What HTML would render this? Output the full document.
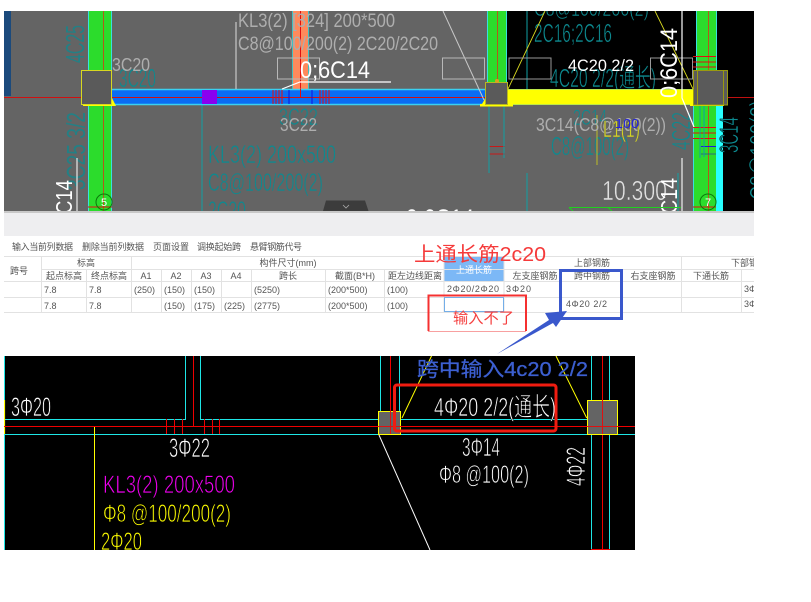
<!DOCTYPE html>
<html><head><meta charset="utf-8">
<style>
html,body{margin:0;padding:0;background:#fff;width:811px;height:602px;overflow:hidden}
svg{display:block}
text{font-family:"Liberation Sans","Noto Sans CJK SC",sans-serif}
.t{font-size:9px;fill:#555}
.c{text-anchor:middle}
.tb line{stroke:#e2e2e2;stroke-width:1}
</style></head><body>
<svg width="811" height="602" viewBox="0 0 811 602" xmlns="http://www.w3.org/2000/svg">
<rect width="811" height="602" fill="#fff"/>
<defs><clipPath id="top"><rect x="4" y="11" width="750" height="200"/></clipPath>
<clipPath id="tbl"><rect x="4" y="250" width="750" height="70"/></clipPath>
<clipPath id="bot"><rect x="4" y="356" width="631" height="194"/></clipPath></defs>

<!-- TOP CAD -->
<g clip-path="url(#top)">
<rect x="4" y="11" width="750" height="200" fill="#646464"/>
<rect x="507" y="11" width="247" height="78" fill="#000"/>
<rect x="716" y="89" width="38" height="122" fill="#000"/>
<rect x="4" y="11" width="7" height="85" fill="#1b4a7c"/>

<!-- green columns -->
<rect x="88" y="11" width="24" height="200" fill="#2cdc2c"/>
<path d="M88.500 11V211M111.500 11V70" stroke="#38e0e0" stroke-width="1"/>
<path d="M111.500 105V211" stroke="#38e0e0"/>
<path d="M103.500 11V211" stroke="#b35a1a" stroke-width="1"/>
<rect x="488" y="11" width="19" height="78" fill="#2cdc2c"/>
<path d="M487.500 11V82M506.500 11V89" stroke="#38e0e0"/>
<path d="M497.500 11V82" stroke="#b35a1a"/>
<rect x="697" y="11" width="20" height="60" fill="#2cdc2c"/>
<path d="M696.500 11V71M716.500 11V71" stroke="#38e0e0"/>
<path d="M708.500 11V71" stroke="#b35a1a"/>
<rect x="693" y="105" width="23" height="106" fill="#2cdc2c"/>
<rect x="716" y="105" width="7" height="106" fill="#27ffff"/>
<path d="M693.500 105V211" stroke="#38e0e0"/>
<path d="M708.500 105V211" stroke="#b35a1a"/>
<path d="M693 56.500H716M693 62H716M693 67H716M693 127.500H716M693 133H716M693 138.500H716M693 207H716" stroke="#e01010" stroke-width="1"/>
<path d="M701 146.500H716" stroke="#1a1ae0"/><path d="M701 154H716" stroke="#2a6a80"/>
<path d="M489 146.500H505M489 154H505" stroke="#c81818"/>
<path d="M88 207H112" stroke="#e01010"/>
<circle cx="104" cy="202" r="8" fill="none" stroke="#0a7a0a"/>
<text x="104" y="206" font-size="11" fill="#fff" class="c">5</text>
<circle cx="708" cy="202" r="8" fill="none" stroke="#0a7a0a"/>
<text x="708" y="206" font-size="11" fill="#fff" class="c">7</text>

<!-- orange column -->
<rect x="293" y="11" width="15" height="78" fill="#ff8a5c"/>
<path d="M292.500 11V89M308.500 11V89" stroke="#38d8d8" stroke-width=".8"/>
<path d="M300.500 11V97" stroke="#e01010"/>

<!-- teal text -->
<g fill="#0d8a90" stroke="#646464" stroke-width=".55">
<text transform="translate(84,63) rotate(-90)" font-size="26" textLength="38" lengthAdjust="spacingAndGlyphs" stroke="none" fill-opacity=".75">4C25</text>
<text transform="translate(85,190) rotate(-90)" font-size="26" textLength="78" lengthAdjust="spacingAndGlyphs" stroke="none" fill-opacity=".75">3C25 3/2</text>
<text x="119" y="87" font-size="26" textLength="37" lengthAdjust="spacingAndGlyphs">3C20</text>
<text x="279" y="125" font-size="24" textLength="39" lengthAdjust="spacingAndGlyphs">3C22</text>
<text x="208" y="163" font-size="25" textLength="128" lengthAdjust="spacingAndGlyphs">KL3(2) 200x500</text>
<text x="208" y="191" font-size="25" textLength="115" lengthAdjust="spacingAndGlyphs">C8@100/200(2)</text>
<text x="208" y="219" font-size="25" textLength="38" lengthAdjust="spacingAndGlyphs">2C20</text>
<text x="573" y="125" font-size="22" textLength="34" lengthAdjust="spacingAndGlyphs">2C14</text>
<text x="551" y="155" font-size="26" textLength="78" lengthAdjust="spacingAndGlyphs">C8@100(2)</text>
<text transform="translate(690,150) rotate(-90)" font-size="26" textLength="38" lengthAdjust="spacingAndGlyphs">4C22</text>
</g>
<g fill="#0d8a90" stroke="#000" stroke-width=".55">
<text x="534" y="42" font-size="26" textLength="78" lengthAdjust="spacingAndGlyphs">2C16;2C16</text>
<text x="534" y="16" font-size="22" textLength="115" lengthAdjust="spacingAndGlyphs">C8@100/200(2)</text>
<text x="550" y="87" font-size="26" textLength="106" lengthAdjust="spacingAndGlyphs">4C20 2/2(通长)</text>
<text transform="translate(738,153) rotate(-90)" font-size="26" textLength="36" lengthAdjust="spacingAndGlyphs">3C14</text>
<text transform="translate(768,200) rotate(-90)" font-size="26" textLength="100" lengthAdjust="spacingAndGlyphs">C8@100(2)</text>
</g>
<path d="M202 105V211M527 11V89M527 173V211M489 105V173M504 105V158M704 105V157M678 173V211M700 105V158" stroke="#0f9fa5" stroke-width="1" fill="none"/>

<!-- blue beam -->
<rect x="112" y="89" width="373" height="16" fill="#0a6cf4"/>
<path d="M112 89.500H485M112 104.500H485" stroke="#3ad0f0" stroke-width="1.500"/>
<path d="M4 97.500H485" stroke="#d01010"/>
<rect x="202" y="90" width="15" height="14" fill="#8a00f0"/>
<path d="M273 90V104M276 90V104M279 90V104M282 90V104M320 90V104M323 90V104M326 90V104M329 90V104" stroke="#e01010" stroke-width="1"/>
<path d="M289 90V104M312 90V104" stroke="#1010e0"/>
<path d="M300.500 89V97" stroke="#e01010"/>

<!-- yellow beam -->
<rect x="497" y="89" width="210" height="16" fill="#ffff00"/>
<path d="M497 89.500H707M497 104.500H707" stroke="#a8e060" stroke-width=".8"/>
<path d="M720 97.500H754" stroke="#c01010"/>

<!-- gray boxes -->
<polygon points="112,98 116,106 83,106 83,105 112,105" fill="#ffff00"/>
<rect x="81.500" y="70.500" width="30" height="34" fill="#5a5a5a" stroke="#d8d820"/>
<rect x="480" y="104" width="33" height="2.500" fill="#ffff00"/>
<polygon points="482,104 486,97 486,104" fill="#ffff00"/>
<rect x="485.500" y="82.500" width="22" height="22" fill="#5a5a5a" stroke="#b8b820"/>
<circle cx="497" cy="81" r="2" fill="#d8a020"/>
<rect x="690" y="104" width="34" height="2" fill="#ffff00"/>
<rect x="693.500" y="70.500" width="34" height="34.500" fill="#5a5a5a" stroke="#9a9a10"/>
<path d="M697.500 71V105" stroke="#9a9a10"/>
<path d="M723.500 71V105" stroke="#9a9a10"/>

<!-- white & yellow lines -->
<g stroke="#d8d820" stroke-width=".9" fill="none">
<path d="M508 89L545 11M693 89L655 11"/>
<path d="M597 115V165" stroke="#c8c820"/>
</g>
<g fill="none" stroke="#c8c8c8">
<path d="M236 22V89" stroke-width="1.200"/>
<path d="M77 158V211" stroke="#e8e8e8" stroke-width="1.200"/>
<path d="M443 11L484 100" stroke-width="1"/>
<rect x="277.500" y="58" width="42" height="21" stroke="#b8b8b8"/>
<rect x="442.500" y="58" width="42" height="21" stroke="#b8b8b8"/>
<rect x="509" y="58" width="42" height="21" stroke="#999"/>
<rect x="650.500" y="58" width="42" height="21" stroke="#999"/>
</g>
<path d="M282 89L300 82H391" fill="none" stroke="#fff" stroke-width="1.200"/>
<path d="M682 11V98L694 127" fill="none" stroke="#fff" stroke-width="1.200"/>
<path d="M682 158V211" stroke="#f0f0f0" stroke-width="1.200"/>

<!-- gray text -->
<g fill="#aeaeae">
<text x="238" y="27" font-size="19" textLength="157" lengthAdjust="spacingAndGlyphs">KL3(2) [324] 200*500</text>
<text x="238" y="50" font-size="19" textLength="200" lengthAdjust="spacingAndGlyphs">C8@100/200(2) 2C20/2C20</text>
<text x="112" y="71" font-size="18" textLength="38" lengthAdjust="spacingAndGlyphs">3C20</text>
<text x="280" y="131" font-size="18" textLength="37" lengthAdjust="spacingAndGlyphs">3C22</text>
<text x="536" y="131" font-size="18" textLength="130" lengthAdjust="spacingAndGlyphs">3C14(C8@100(2))</text>
</g>
<text x="602" y="200" font-size="28" fill="#e0e0e0" stroke="#646464" stroke-width=".5" textLength="65" lengthAdjust="spacingAndGlyphs">10.300</text>
<text x="603" y="137" font-size="24" fill="#d8d820" stroke="#646464" stroke-width=".5" textLength="37" lengthAdjust="spacingAndGlyphs">L1(1)</text>
<text x="615" y="128" font-size="13" fill="#2020e0" textLength="24" lengthAdjust="spacingAndGlyphs">100</text>
<!-- white text -->
<g fill="#fff">
<text x="300" y="78" font-size="24" textLength="70" lengthAdjust="spacingAndGlyphs">0;6C14</text>
<text x="568" y="71" font-size="17" textLength="66" lengthAdjust="spacingAndGlyphs">4C20 2/2</text>
<text transform="translate(677,98) rotate(-90)" font-size="24" textLength="70" lengthAdjust="spacingAndGlyphs">0;6C14</text>
<text transform="translate(72,214) rotate(-90)" font-size="23" textLength="34" lengthAdjust="spacingAndGlyphs">C14</text>
<text transform="translate(677,214) rotate(-90)" font-size="23" textLength="36" lengthAdjust="spacingAndGlyphs">C14</text>
<text x="406" y="226" font-size="24" textLength="68" lengthAdjust="spacingAndGlyphs">0;6C14</text>
</g>
<path d="M569 207.500H681M569 207.500L573 211M608 207.500L612 211" stroke="#20d020" fill="none"/>
<path d="M323 211L326 200.500H365L368.500 211Z" fill="#3c3c3c"/>
<path d="M343 205L346 208L349 205" fill="none" stroke="#aaa" stroke-width=".8"/>
</g>

<rect x="4" y="211" width="750" height="2" fill="#c8c8c8"/>
<rect x="4" y="213" width="750" height="23" fill="#eeeef0"/>

<!-- TOOLBAR -->
<g>
<text x="12" y="250" class="t" textLength="61">输入当前列数据</text>
<text x="82" y="250" class="t" textLength="62">删除当前列数据</text>
<text x="153" y="250" class="t">页面设置</text>
<text x="197" y="250" class="t" textLength="44">调换起始跨</text>
<text x="250" y="250" class="t" textLength="52">悬臂钢筋代号</text>
</g>

<!-- TABLE -->
<rect x="444" y="256" width="60" height="25" fill="#7cb8f6"/>
<g class="tb">
<line x1="4" y1="256.500" x2="754" y2="256.500"/>
<line x1="41" y1="269.500" x2="754" y2="269.500"/>
<line x1="4" y1="281.500" x2="754" y2="281.500"/>
<line x1="4" y1="297.500" x2="754" y2="297.500"/>
<line x1="4" y1="312.500" x2="754" y2="312.500"/>
<line x1="41.500" y1="256" x2="41.500" y2="312"/>
<line x1="86.500" y1="269" x2="86.500" y2="312"/>
<line x1="131.500" y1="256" x2="131.500" y2="312"/>
<line x1="161.500" y1="269" x2="161.500" y2="312"/>
<line x1="191.500" y1="269" x2="191.500" y2="312"/>
<line x1="221.500" y1="269" x2="221.500" y2="312"/>
<line x1="251.500" y1="269" x2="251.500" y2="312"/>
<line x1="325.500" y1="269" x2="325.500" y2="312"/>
<line x1="384.500" y1="269" x2="384.500" y2="312"/>
<line x1="444" y1="256" x2="444" y2="312"/>
<line x1="504" y1="256" x2="504" y2="312"/>
<line x1="561" y1="269" x2="561" y2="312"/>
<line x1="622" y1="269" x2="622" y2="312"/>
<line x1="681.500" y1="256" x2="681.500" y2="312"/>
<line x1="741.500" y1="269" x2="741.500" y2="312"/>
</g>
<g clip-path="url(#tbl)">
<text x="10" y="274" class="t">跨号</text>
<text x="86" y="266" class="t c">标高</text>
<text x="288" y="266" class="t c">构件尺寸(mm)</text>
<text x="64" y="279" class="t c">起点标高</text>
<text x="109" y="279" class="t c">终点标高</text>
<text x="146" y="279" class="t c">A1</text>
<text x="176" y="279" class="t c">A2</text>
<text x="206" y="279" class="t c">A3</text>
<text x="236" y="279" class="t c">A4</text>
<text x="288" y="279" class="t c">跨长</text>
<text x="355" y="279" class="t c">截面(B*H)</text>
<text x="415" y="279" class="t c">距左边线距离</text>
<text x="474" y="273" class="c" font-size="9" fill="#fff">上通长筋</text>
<text x="535" y="279" class="t c">左支座钢筋</text>
<text x="592" y="266" class="t c">上部钢筋</text>
<text x="592" y="279" class="t c">跨中钢筋</text>
<text x="653" y="279" class="t c">右支座钢筋</text>
<text x="711" y="279" class="t c">下通长筋</text>
<text x="731" y="266" class="t">下部钢筋</text>

<text x="44" y="293" class="t">7.8</text><text x="89" y="293" class="t">7.8</text>
<text x="134" y="293" class="t">(250)</text><text x="164" y="293" class="t">(150)</text><text x="194" y="293" class="t">(150)</text>
<text x="254" y="293" class="t">(5250)</text><text x="328" y="293" class="t">(200*500)</text><text x="387" y="293" class="t">(100)</text>
<text x="447" y="292" class="t" textLength="52">2Φ20/2Φ20</text>
<text x="506" y="292" class="t" textLength="25">3Φ20</text>
<text x="744" y="292" class="t">3Φ</text>

<text x="44" y="309" class="t">7.8</text><text x="89" y="309" class="t">7.8</text>
<text x="164" y="309" class="t">(150)</text><text x="194" y="309" class="t">(175)</text><text x="224" y="309" class="t">(225)</text>
<text x="254" y="309" class="t">(2775)</text><text x="328" y="309" class="t">(200*500)</text><text x="387" y="309" class="t">(100)</text>
<text x="566" y="307" class="t" textLength="41">4Φ20 2/2</text>
<text x="744" y="307" class="t">3Φ</text>
</g>
<rect x="444.500" y="297.500" width="59" height="14" fill="#fff" stroke="#74aee8"/>

<!-- BOTTOM CAD -->
<g clip-path="url(#bot)">
<rect x="4" y="356" width="631" height="194" fill="#000"/>
<g fill="none" stroke="#1ee6e6" stroke-width="1">
<path d="M4.500 356V550"/>
<path d="M4 419.500H185.500V356M200.500 356V419.500H378M401 419.500H587"/>
<path d="M4 434.500H378M401 434.500H587M618 434.500H635"/>
<path d="M380.500 356V411M399.500 356V411M591.500 356V400M609.500 356V400M591.500 435V550M609.500 435V550"/>
<path d="M587 419.500H591"/>
</g>
<path d="M4.500 400V434" stroke="#ffff00" stroke-width="1.200"/>
<g fill="none" stroke="#f00000" stroke-width="1">
<path d="M4 426.500H635"/>
<path d="M193.500 356V426M390.500 356V411M602.500 356V400M602.500 435V550M591 549.500H610"/>
<path d="M166.500 419V434M174.500 419V434M182.500 419V434M204.500 419V434M212.500 419V434M219.500 419V434"/>
</g>
<path d="M94.500 427V550" stroke="#ffff00"/>
<path d="M402 418L431.500 356M586.700 418L556 356" stroke="#ffff00" fill="none"/>
<path d="M379 435L430 550" stroke="#fff"/>
<rect x="378.500" y="411.500" width="22" height="23" fill="#646464" stroke="#ffff00"/>
<path d="M390.500 411V434" stroke="#e01010"/><path d="M378 426.500H401" stroke="#e01010"/>
<rect x="587.500" y="400.500" width="30" height="34" fill="#646464" stroke="#ffff00"/>
<path d="M602.500 400V434" stroke="#e01010"/><path d="M587 426.500H618" stroke="#e01010"/>

<g fill="#fff" stroke="#000" stroke-width=".7">
<text x="11" y="416" font-size="27" textLength="40" lengthAdjust="spacingAndGlyphs">3Φ20</text>
<text x="169" y="457" font-size="27" textLength="41" lengthAdjust="spacingAndGlyphs">3Φ22</text>
<text x="434" y="416" font-size="26" textLength="122" lengthAdjust="spacingAndGlyphs">4Φ20 2/2(通长)</text>
<text x="462" y="456" font-size="26" textLength="38" lengthAdjust="spacingAndGlyphs">3Φ14</text>
<text x="439" y="483" font-size="25" textLength="90" lengthAdjust="spacingAndGlyphs">Φ8 @100(2)</text>
<text transform="translate(585,486) rotate(-90)" font-size="27" textLength="39" lengthAdjust="spacingAndGlyphs">4Φ22</text>
</g>
<g stroke="#000" stroke-width=".7">
<text x="103" y="493" font-size="25" fill="#f000f0" textLength="132" lengthAdjust="spacingAndGlyphs">KL3(2) 200x500</text>
<text x="103" y="522" font-size="25" fill="#ffff00" textLength="128" lengthAdjust="spacingAndGlyphs">Φ8 @100/200(2)</text>
<text x="101" y="550" font-size="25" fill="#ffff00" textLength="41" lengthAdjust="spacingAndGlyphs">2Φ20</text>
</g>
</g>

<!-- annotations -->
<rect x="394.500" y="385" width="161.500" height="46" rx="2.500" fill="none" stroke="#f01c10" stroke-width="3"/>
<text x="414" y="261" font-size="20" fill="#f53a3a" textLength="132" lengthAdjust="spacingAndGlyphs">上通长筋2c20</text>
<path d="M428.500 331V295.500H526V331" fill="none" stroke="#f53030" stroke-width="2"/>
<path d="M428 331.500H526" stroke="#f8a0a0" stroke-width="1"/>
<text x="453" y="323" font-size="15" fill="#f54040" textLength="61" lengthAdjust="spacingAndGlyphs">输入不了</text>
<rect x="560.500" y="270.500" width="61" height="48" fill="none" stroke="#3a58cc" stroke-width="3"/>
<polygon points="497,354 549,320 545,313 567,311 556,327 553,323" fill="#3a58cc"/>
<text x="417" y="376" font-size="20" fill="#3c5fd0" stroke="#3c5fd0" stroke-width=".3" textLength="171" lengthAdjust="spacingAndGlyphs">跨中输入4c20 2/2</text>
</svg>
</body></html>
